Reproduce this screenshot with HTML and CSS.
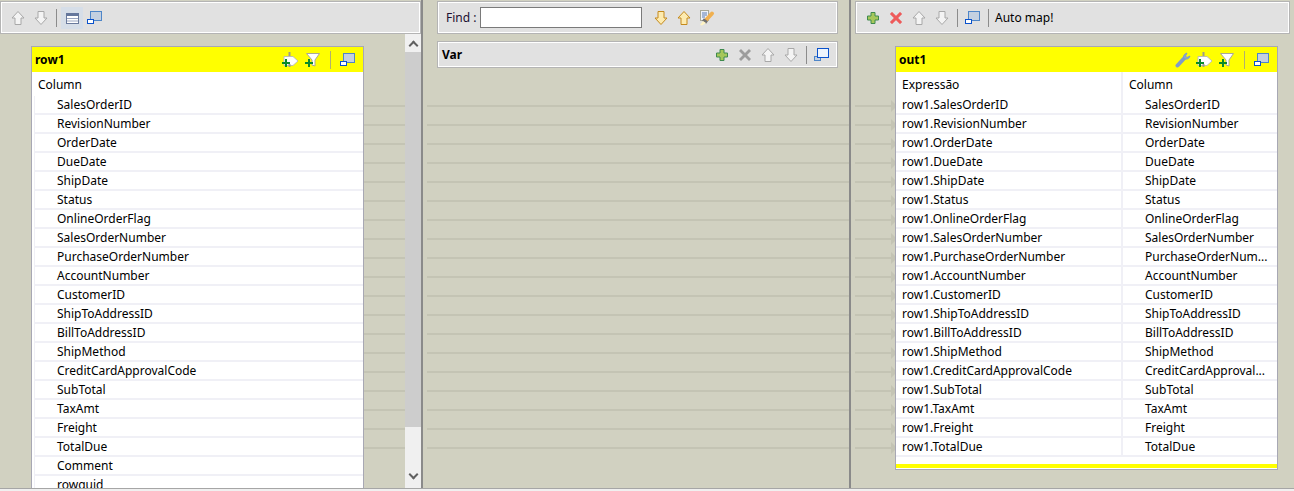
FILE: index.html
```html
<!DOCTYPE html>
<html>
  <head>
    <title>Mapper</title>
    <meta name="viewport" content="width=device-width, initial-scale=1.0">
    <link rel="stylesheet" href="styles.css">
  </head>
  <body>
    <svg class="sprite" width="0" height="0">
      <defs>
        <symbol id="i-up" viewBox="0 0 16 16"><path d="M8 1.5 14 8H11V14.5H5V8H2Z" fill="#f4f4f4" stroke="#a8a8a8"/></symbol>
        <symbol id="i-down" viewBox="0 0 16 16"><path d="M8 14.5 14 8H11V1.5H5V8H2Z" fill="#f4f4f4" stroke="#a8a8a8"/></symbol>
        <symbol id="i-up-o" viewBox="0 0 16 16"><path d="M8 1.5 14 8H11V14.5H5V8H2Z" fill="#fdebb0" stroke="#c58a1c"/></symbol>
        <symbol id="i-down-o" viewBox="0 0 16 16"><path d="M8 14.5 14 8H11V1.5H5V8H2Z" fill="#fdebb0" stroke="#c58a1c"/></symbol>
        <symbol id="i-table" viewBox="0 0 16 16"><rect x="2.5" y="3.5" width="12" height="10" fill="#fff" stroke="#6a7a9c"/><rect x="2" y="3" width="13" height="3" fill="#65779c"/><path d="M3 8.5H14M3 11H14" stroke="#9aa6c0"/></symbol>
        <symbol id="i-win" viewBox="0 0 16 16"><rect x="3.5" y="1.5" width="11" height="9" fill="#c4d0e0" stroke="#4f86c8"/><rect x="0.5" y="9.5" width="6" height="4" fill="#fff" stroke="#0a52cc"/></symbol>
        <symbol id="i-win-b" viewBox="0 0 16 16"><rect x="0.5" y="9.5" width="6" height="4" fill="#c4d0e0" stroke="#4f86c8"/><rect x="3.5" y="1.5" width="11" height="9" fill="#eef4fc" stroke="#0a52cc"/></symbol>
        <symbol id="i-plus" viewBox="0 0 16 16"><path d="M6 2.5H10V6H13.5V10H10V13.5H6V10H2.5V6H6Z" fill="#a6c75a" stroke="#3f8a4e"/></symbol>
        <symbol id="i-x" viewBox="0 0 16 16"><path d="M2 4 4 2 8 6 12 2 14 4 10 8 14 12 12 14 8 10 4 14 2 12 6 8Z" fill="#ee5a5a" stroke="#e87878" stroke-width=".5"/></symbol>
        <symbol id="i-x-off" viewBox="0 0 16 16"><path d="M2 4 4 2 8 6 12 2 14 4 10 8 14 12 12 14 8 10 4 14 2 12 6 8Z" fill="#9c9c9c"/></symbol>
        <symbol id="i-in" viewBox="0 0 18 16"><path d="M7.5 0V4" stroke="#9c9c8c" stroke-width="2"/><path d="M2 4.500H11L16 9 11 13.500H2Z" fill="#fff" stroke="#c0c0b0"/><path d="M7.500 12V15" stroke="#9c9c8c" stroke-width="2"/><path d="M3 7V10H0V12H3V15H5V12H8V10H5V7Z" fill="#0a8a2a"/></symbol>
        <symbol id="i-filter" viewBox="0 0 16 16"><path d="M1.500 1.500H14.500L10 8V14L7 13V8Z" fill="#fff" stroke="#a8a898"/><path d="M3 7V10H0V12H3V15H5V12H8V10H5V7Z" fill="#0a8a2a"/></symbol>
        <symbol id="i-wrench" viewBox="0 0 16 16"><path d="M2.500 13.500 9 6.500" stroke="#7f9cc8" stroke-width="4" stroke-linecap="round"/><path d="M9 6.500A3.500 3.500 0 0 1 11 1.500L12 1 10.500 4 12 5.500 15 4A4 4 0 0 1 9 6.500Z" fill="#8fa8cc" stroke="#7f9cc8"/></symbol>
        <symbol id="i-find" viewBox="0 0 16 16"><rect x="1.500" y="0.500" width="8" height="10" fill="#eef2fa" stroke="#a8a898"/><path d="M3 3H8M3 5H8M3 7H6" stroke="#5a7ab0"/><path d="M7 10 13 3.500" stroke="#f0b050" stroke-width="4" stroke-linecap="round"/><path d="M4 9.500 8 12.500" stroke="#707070" stroke-width="3"/><path d="M1 15 4 11 7 13 3 15.500Z" fill="#fff4c4"/></symbol>
      </defs>
    </svg>

    <div class="mapper">
      <div class="links">
        <div class="link"></div><div class="link"></div><div class="link"></div><div class="link"></div>
        <div class="link"></div><div class="link"></div><div class="link"></div><div class="link"></div>
        <div class="link"></div><div class="link"></div><div class="link"></div><div class="link"></div>
        <div class="link"></div><div class="link"></div><div class="link"></div><div class="link"></div>
        <div class="link"></div><div class="link"></div><div class="link"></div>
      </div>

      <section class="pane pane-in">
        <div class="toolbar">
          <svg class="ico"><use href="#i-up"/></svg>
          <svg class="ico"><use href="#i-down"/></svg>
          <span class="sep"></span>
          <span class="toggled"><svg class="ico"><use href="#i-table"/></svg></span>
          <svg class="ico"><use href="#i-win"/></svg>
        </div>
        <div class="pane-body">
          <div class="table table-in">
            <div class="table-title">
              <b>row1</b>
              <svg class="ico ico-wide"><use href="#i-in"/></svg>
              <svg class="ico"><use href="#i-filter"/></svg>
              <span class="sep sep-title"></span>
              <svg class="ico"><use href="#i-win"/></svg>
            </div>
            <div class="head">Column</div>
            <div class="row"><span class="col">SalesOrderID</span></div>
            <div class="row"><span class="col">RevisionNumber</span></div>
            <div class="row"><span class="col">OrderDate</span></div>
            <div class="row"><span class="col">DueDate</span></div>
            <div class="row"><span class="col">ShipDate</span></div>
            <div class="row"><span class="col">Status</span></div>
            <div class="row"><span class="col">OnlineOrderFlag</span></div>
            <div class="row"><span class="col">SalesOrderNumber</span></div>
            <div class="row"><span class="col">PurchaseOrderNumber</span></div>
            <div class="row"><span class="col">AccountNumber</span></div>
            <div class="row"><span class="col">CustomerID</span></div>
            <div class="row"><span class="col">ShipToAddressID</span></div>
            <div class="row"><span class="col">BillToAddressID</span></div>
            <div class="row"><span class="col">ShipMethod</span></div>
            <div class="row"><span class="col">CreditCardApprovalCode</span></div>
            <div class="row"><span class="col">SubTotal</span></div>
            <div class="row"><span class="col">TaxAmt</span></div>
            <div class="row"><span class="col">Freight</span></div>
            <div class="row"><span class="col">TotalDue</span></div>
            <div class="row"><span class="col">Comment</span></div>
            <div class="row"><span class="col">rowguid</span></div>
          </div>
          <div class="scrollbar">
            <span class="chev chev-up"></span>
            <div class="thumb"></div>
            <span class="chev chev-down"></span>
          </div>
        </div>
      </section>

      <div class="sash"></div>

      <section class="pane pane-var">
        <div class="toolbar">
          <label class="find-label" for="find">Find :</label>
          <input class="find-input" id="find" type="text">
          <svg class="ico"><use href="#i-down-o"/></svg>
          <svg class="ico"><use href="#i-up-o"/></svg>
          <svg class="ico"><use href="#i-find"/></svg>
        </div>
        <div class="var-bar">
          <b>Var</b>
          <svg class="ico"><use href="#i-plus"/></svg>
          <svg class="ico"><use href="#i-x-off"/></svg>
          <svg class="ico"><use href="#i-up"/></svg>
          <svg class="ico"><use href="#i-down"/></svg>
          <span class="sep"></span>
          <svg class="ico"><use href="#i-win-b"/></svg>
        </div>
      </section>

      <div class="sash"></div>

      <section class="pane pane-out">
        <div class="toolbar">
          <svg class="ico"><use href="#i-plus"/></svg>
          <svg class="ico"><use href="#i-x"/></svg>
          <svg class="ico"><use href="#i-up"/></svg>
          <svg class="ico"><use href="#i-down"/></svg>
          <span class="sep"></span>
          <svg class="ico"><use href="#i-win"/></svg>
          <span class="sep"></span>
          <span class="automap">Auto map!</span>
        </div>
        <div class="pane-body">
          <div class="table table-out">
            <div class="table-title">
              <b>out1</b>
              <svg class="ico"><use href="#i-wrench"/></svg>
              <svg class="ico ico-wide"><use href="#i-in"/></svg>
              <svg class="ico"><use href="#i-filter"/></svg>
              <span class="sep sep-title"></span>
              <svg class="ico"><use href="#i-win"/></svg>
            </div>
            <div class="head"><span class="expr">Expressão</span><span class="col-head">Column</span></div>
            <div class="row"><span class="expr">row1.SalesOrderID</span><span class="col">SalesOrderID</span></div>
            <div class="row"><span class="expr">row1.RevisionNumber</span><span class="col">RevisionNumber</span></div>
            <div class="row"><span class="expr">row1.OrderDate</span><span class="col">OrderDate</span></div>
            <div class="row"><span class="expr">row1.DueDate</span><span class="col">DueDate</span></div>
            <div class="row"><span class="expr">row1.ShipDate</span><span class="col">ShipDate</span></div>
            <div class="row"><span class="expr">row1.Status</span><span class="col">Status</span></div>
            <div class="row"><span class="expr">row1.OnlineOrderFlag</span><span class="col">OnlineOrderFlag</span></div>
            <div class="row"><span class="expr">row1.SalesOrderNumber</span><span class="col">SalesOrderNumber</span></div>
            <div class="row"><span class="expr">row1.PurchaseOrderNumber</span><span class="col">PurchaseOrderNum...</span></div>
            <div class="row"><span class="expr">row1.AccountNumber</span><span class="col">AccountNumber</span></div>
            <div class="row"><span class="expr">row1.CustomerID</span><span class="col">CustomerID</span></div>
            <div class="row"><span class="expr">row1.ShipToAddressID</span><span class="col">ShipToAddressID</span></div>
            <div class="row"><span class="expr">row1.BillToAddressID</span><span class="col">BillToAddressID</span></div>
            <div class="row"><span class="expr">row1.ShipMethod</span><span class="col">ShipMethod</span></div>
            <div class="row"><span class="expr">row1.CreditCardApprovalCode</span><span class="col">CreditCardApproval...</span></div>
            <div class="row"><span class="expr">row1.SubTotal</span><span class="col">SubTotal</span></div>
            <div class="row"><span class="expr">row1.TaxAmt</span><span class="col">TaxAmt</span></div>
            <div class="row"><span class="expr">row1.Freight</span><span class="col">Freight</span></div>
            <div class="row"><span class="expr">row1.TotalDue</span><span class="col">TotalDue</span></div>
            <div class="table-foot"></div>
          </div>
        </div>
      </section>
    </div>
  </body>
</html>
```

FILE: styles.css
```css
body {
  margin: 0;
  background-color: #f0f0f0;
  font-family: "Noto Sans", sans-serif;
  font-size: 12px;
  color: #000;
  overflow: hidden;
}
.sprite {
  position: absolute;
}
.mapper {
  position: relative;
  display: flex;
  height: 488px;
  background-color: #d1d1c1;
  border-bottom: 1px solid #a6a6a6;
  overflow: hidden;
}

/* connection lines between the tables, they run under the panes */
.links {
  position: absolute;
  top: 105px;
  left: 363px;
  width: 534px;
}
.link {
  position: relative;
  height: 2px;
  margin-bottom: 17px;
  background-color: #c4c4b4;
}
.link::after {
  content: "";
  position: absolute;
  right: 0;
  top: -5px;
  border-left: 6px solid #c4c4b4;
  border-top: 6px solid transparent;
  border-bottom: 6px solid transparent;
}

.pane {
  position: relative;
  display: flex;
  flex-direction: column;
  flex: none;
}
.pane-in {
  width: 421px;
}
.pane-var {
  width: 422px;
  padding-left: 10px;
  padding-right: 11px;
  box-sizing: border-box;
}
.pane-out {
  flex: 1;
  padding-right: 4px;
}
.sash {
  flex: none;
  width: 6px;
  background-color: #d1d1c1;
  border-left: 2px solid #8a8a8a;
  position: relative;
  box-sizing: border-box;
}

.toolbar {
  display: flex;
  align-items: center;
  gap: 7px;
  flex: none;
  height: 33px;
  margin-top: 1px;
  padding-left: 9px;
  background-color: #e1e1e1;
  border: 1px solid #b4b4b4;
  outline: 1px solid #fff;
  outline-offset: -2px;
  box-sizing: content-box;
  height: 31px;
}
.ico {
  flex: none;
  width: 16px;
  height: 16px;
}
.ico-wide {
  width: 18px;
}
.sep {
  flex: none;
  width: 1px;
  height: 18px;
  background-color: #8c8c8c;
}
.toggled {
  display: flex;
  padding: 3px;
  margin: 0 -3px;
  background-color: #d6dee8;
}
.automap {
  margin-left: -1px;
}

.find-label {
  margin-left: -1px;
  color: #201030;
}
.find-input {
  width: 158px;
  height: 17px;
  padding: 1px;
  margin: 0 4px 0 -3px;
  border: 1px solid #7a7a7a;
  background-color: #fff;
}
.var-bar {
  display: flex;
  align-items: center;
  gap: 7px;
  height: 25px;
  margin-top: 7px;
  padding: 0 7px 0 4px;
  background-color: #e1e1e1;
  border: 1px solid #b4b4b4;
  outline: 1px solid #fff;
  outline-offset: -2px;
}
.var-bar b {
  margin-right: auto;
}

.pane-body {
  position: relative;
  flex: 1;
  min-height: 0;
  overflow: hidden;
}
.table {
  position: absolute;
  box-sizing: border-box;
  background-color: #fff;
  border: 1px solid #a8a8b4;
}
.table-in {
  top: 12px;
  left: 31px;
  width: 333px;
  height: 460px;
}
.table-out {
  top: 12px;
  left: 40px;
  width: 383px;
  height: 424px;
}
.table-title {
  display: flex;
  align-items: center;
  gap: 5px;
  height: 25px;
  padding: 0 7px 0 3px;
  margin: 0 0 0 0;
  background-color: #ff0;
  border-bottom: 0;
}
.table-title b {
  margin-right: auto;
}
.sep-title {
  margin: 0 4px;
  background-color: #b0b070;
}
.head {
  display: flex;
  align-items: center;
  height: 24px;
  padding-left: 6px;
}
.row {
  display: flex;
  align-items: center;
  height: 19px;
  box-sizing: border-box;
  margin-left: 2px;
  border-bottom: 2px solid #f0f0f6;
}
.col {
  padding-left: 22px;
}
.table-in .row {
  border-left: 1px solid #f0f0f6;
}
.table-out .head {
  padding-left: 0;
}
.table-out .row {
  margin-left: 0;
}
.expr {
  flex: none;
  width: 227px;
  padding-left: 6px;
  box-sizing: border-box;
}
.table-out .expr {
  height: 100%;
  display: flex;
  align-items: center;
  border-right: 2px solid #f0f0f6;
}
.col-head {
  padding-left: 6px;
}
.table-foot {
  height: 4px;
  margin-top: 7px;
  background-color: #ff0;
}

.scrollbar {
  position: absolute;
  top: 0;
  bottom: 0;
  right: 0;
  width: 16px;
  background-color: #f0f0f0;
}
.thumb {
  position: absolute;
  top: 18px;
  left: 0;
  width: 100%;
  height: 375px;
  background-color: #cdcdcd;
}
.chev {
  position: absolute;
  left: 5px;
  width: 5px;
  height: 5px;
  border: solid #606060;
  border-width: 2px 0 0 2px;
}
.chev-up {
  top: 8px;
  transform: rotate(45deg);
}
.chev-down {
  bottom: 10px;
  transform: rotate(225deg);
}
```
